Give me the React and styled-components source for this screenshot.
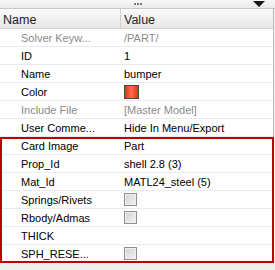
import React from "react";
import styled, { createGlobalStyle } from "styled-components";

const GlobalStyle = createGlobalStyle`
  body {
    margin: 0;
    background: #ffffff;
    font-family: "Liberation Sans", Arial, sans-serif;
  }
`;

const rows = [
  { name: "Solver Keyw...", value: "/PART/", muted: true },
  { name: "ID", value: "1" },
  { name: "Name", value: "bumper" },
  { name: "Color", type: "color" },
  { name: "Include File", value: "[Master Model]", muted: true },
  { name: "User Comme...", value: "Hide In Menu/Export" },
];

const cardRows = [
  { name: "Card Image", value: "Part" },
  { name: "Prop_Id", value: "shell 2.8 (3)" },
  { name: "Mat_Id", value: "MATL24_steel (5)" },
  { name: "Springs/Rivets", type: "check" },
  { name: "Rbody/Admas", type: "check" },
  { name: "THICK", value: "" },
  { name: "SPH_RESE...", type: "check" },
];

function Row({ row }) {
  return (
    <RowBox>
      <NameCell muted={row.muted}>{row.name}</NameCell>
      <ValueCell muted={row.muted}>
        {row.type === "color" && <Swatch />}
        {row.type === "check" && <CheckBox />}
        {row.value}
      </ValueCell>
    </RowBox>
  );
}

function App() {
  return (
    <>
      <GlobalStyle />
      <Panel>
        <TopBar>
          <Grip>
            <span />
            <span />
            <span />
          </Grip>
          <DropArrow />
        </TopBar>
        <Table>
          <Header>
            <HeadCell>Name</HeadCell>
            <HeadCell divider>Value</HeadCell>
          </Header>
          {rows.map((row) => (
            <Row key={row.name} row={row} />
          ))}
          <Highlight>
            {cardRows.map((row) => (
              <Row key={row.name} row={row} />
            ))}
          </Highlight>
        </Table>
        <Footer />
      </Panel>
    </>
  );
}

const Panel = styled.div`
  width: 275px;
  height: 270px;
  display: flex;
  flex-direction: column;
  background: #efefef;
  overflow: hidden;
`;

const TopBar = styled.div`
  position: relative;
  height: 8px;
  border-bottom: 1px solid #c9c9c9;
  background: linear-gradient(#f7f7f7, #e9e9e9);
  display: flex;
  justify-content: center;
  align-items: center;
`;

const Grip = styled.div`
  display: flex;
  gap: 1px;
  span {
    width: 2px;
    height: 2px;
    background: #7a7a7a;
  }
`;

const DropArrow = styled.div`
  position: absolute;
  right: 10px;
  top: 1px;
  width: 0;
  height: 0;
  border-left: 6px solid transparent;
  border-right: 6px solid transparent;
  border-top: 6px solid #1a1a1a;
`;

const Table = styled.div`
  width: 273px;
  background: #ffffff;
  border-right: 1px solid #b9b9b9;
  display: flex;
  flex-direction: column;
`;

const Header = styled.div`
  display: grid;
  grid-template-columns: 120px 1fr;
  height: 19px;
  border-bottom: 1px solid #d5d5d5;
  background: linear-gradient(#fbfbfb, #e6e6e6);
`;

const HeadCell = styled.div`
  display: flex;
  align-items: center;
  padding-left: 3px;
  padding-top: 2px;
  font-size: 12.5px;
  color: #1e1e1e;
  border-left: ${(p) => (p.divider ? "1px solid #d0d0d0" : "none")};
`;

const Highlight = styled.div`
  position: relative;
  &::after {
    content: "";
    position: absolute;
    inset: 0 -1px 0 0;
    border: 2px solid #c00000;
    pointer-events: none;
  }
`;

const RowBox = styled.div`
  display: grid;
  grid-template-columns: 121px 1fr;
  height: 17px;
  border-bottom: 1px solid #e8ecf1;
  font-size: 11px;
`;

const NameCell = styled.div`
  display: flex;
  align-items: center;
  padding-left: 21px;
  color: ${(p) => (p.muted ? "#8a8a8a" : "#000000")};
  white-space: nowrap;
`;

const ValueCell = styled.div`
  display: flex;
  align-items: center;
  padding-left: 3px;
  color: ${(p) => (p.muted ? "#8a8a8a" : "#000000")};
  white-space: nowrap;
`;

const Swatch = styled.div`
  width: 15px;
  height: 14px;
  margin-top: 1px;
  box-sizing: border-box;
  border: 1px solid #4a4a4a;
  background: linear-gradient(90deg, #e3321a, #ff6d4d 50%, #e3321a);
`;

const CheckBox = styled.div`
  width: 13px;
  height: 13px;
  box-sizing: border-box;
  border: 1px solid #8e8f8f;
  background: linear-gradient(135deg, #cfd2d6, #f4f4f4);
  box-shadow: inset 0 0 0 1px #f0f0f0;
`;

const Footer = styled.div`
  flex: 1;
  margin-top: 1px;
  background: #eeeeee;
`;

export default App;
